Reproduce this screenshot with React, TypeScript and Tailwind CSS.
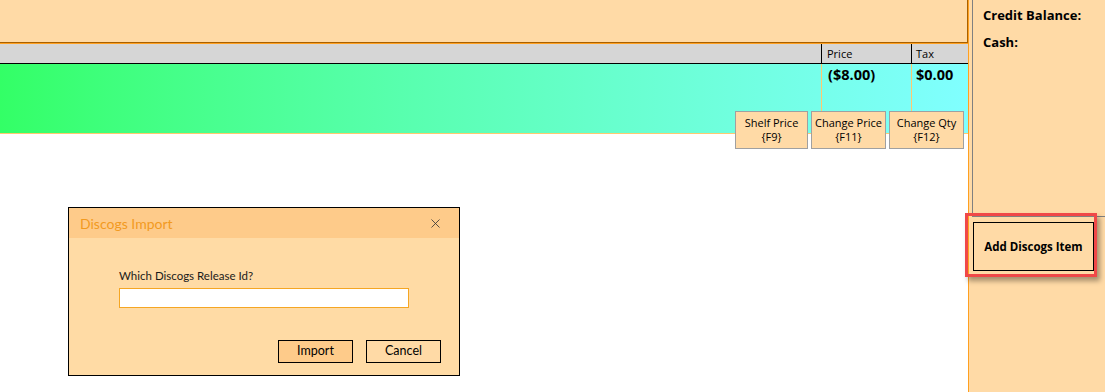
import { X } from 'lucide-react'

function KeyButton({ label, keyName, w }: { label: string; keyName: string; w: string }) {
  return (
    <div className={`${w} h-[38px] flex flex-col items-center justify-center border border-[#a0a0a0] bg-[#ffdaa6] text-[11px] leading-[14px] text-black`}>
      <span>{label}</span>
      <span>{keyName}</span>
    </div>
  )
}

function DiscogsDialog() {
  return (
    <div className="absolute left-[68px] top-[207px] w-[392px] h-[169px] border border-black bg-[#ffdba5] flex flex-col" style={{ fontFamily: 'Lato, "Open Sans", sans-serif' }}>
      <div className="h-[30px] bg-[#fecb8a] flex items-center justify-between pl-[11px] pr-[16px]">
        <span className="text-[14px] text-[#f29a1f]">Discogs Import</span>
        <X className="w-[15px] h-[15px] text-[#333]" strokeWidth={1.3} />
      </div>
      <div className="flex-1 pl-[50px] pr-[18px] pt-[30px] flex flex-col">
        <div className="text-[11.5px] leading-[16px] text-[#1a1a1a]">Which Discogs Release Id?</div>
        <div className="mt-[4px] w-[290px] h-[20px] bg-white border border-[#f5a623]" />
        <div className="flex justify-end gap-[13px] mt-[32px]">
          <div className="w-[75px] h-[23px] border border-black bg-[#fecb8a] flex items-center justify-center text-[12.5px]">Import</div>
          <div className="w-[75px] h-[23px] border border-black bg-[#ffdaa6] flex items-center justify-center text-[12.5px]">Cancel</div>
        </div>
      </div>
    </div>
  )
}

export default function App() {
  return (
    <div className="w-[1105px] h-[392px] flex bg-white overflow-hidden text-black" style={{ fontFamily: '"Open Sans", "Noto Sans", sans-serif' }}>
      <div className="relative w-[969px] h-full border-r border-[#ffa020] flex flex-col">
        <div className="h-[43px] bg-[#ffdaa6] border-b border-r border-[#a86000]" />
        <div className="h-[21px] bg-[#d6d6d6] border-b border-black border-t border-t-[#ffa020] flex text-[11px]">
          <div className="w-[822px] border-r border-black" />
          <div className="w-[90px] border-r border-black pl-[5px] leading-[19px]">Price</div>
          <div className="flex-1 pl-[4px] leading-[19px]">Tax</div>
        </div>
        <div className="h-[70px] bg-gradient-to-r from-[#33ff66] to-[#80ffff] border-b border-[#ffc870] flex font-bold text-[14.5px] leading-[20px]">
          <div className="w-[822px] border-r border-[#ffc870]" />
          <div className="w-[90px] border-r border-[#ffc870] pl-[6px] pt-[1px]">($8.00)</div>
          <div className="flex-1 pl-[4px] pt-[1px]">$0.00</div>
        </div>
        <div className="absolute left-[735px] top-[111px] flex gap-[3px]">
          <KeyButton label="Shelf Price" keyName="{F9}" w="w-[73px]" />
          <KeyButton label="Change Price" keyName="{F11}" w="w-[75px]" />
          <KeyButton label="Change Qty" keyName="{F12}" w="w-[75px]" />
        </div>
        <DiscogsDialog />
      </div>
      <div className="flex-1 bg-[#ffdaa6] flex flex-col">
        <div className="h-[217px] ml-[3px] border-l border-b border-[#808080] pl-[10px] pt-[5px] font-bold text-[13px]">
          <div className="leading-[20px]">Credit Balance:</div>
          <div className="leading-[20px] mt-[7px]">Cash:</div>
        </div>
        <div className="relative">
          <div className="absolute left-[-4px] top-[-4px] w-[132px] h-[64px] border-[3px] border-[#f04848] shadow-[3px_4px_5px_rgba(0,0,0,0.35)] pt-[6px] pl-[5px] pb-[3px]">
            <div className="w-full h-full border border-black flex items-center justify-center text-[11.5px] font-bold">
              Add Discogs Item
            </div>
          </div>
        </div>
      </div>
    </div>
  )
}
